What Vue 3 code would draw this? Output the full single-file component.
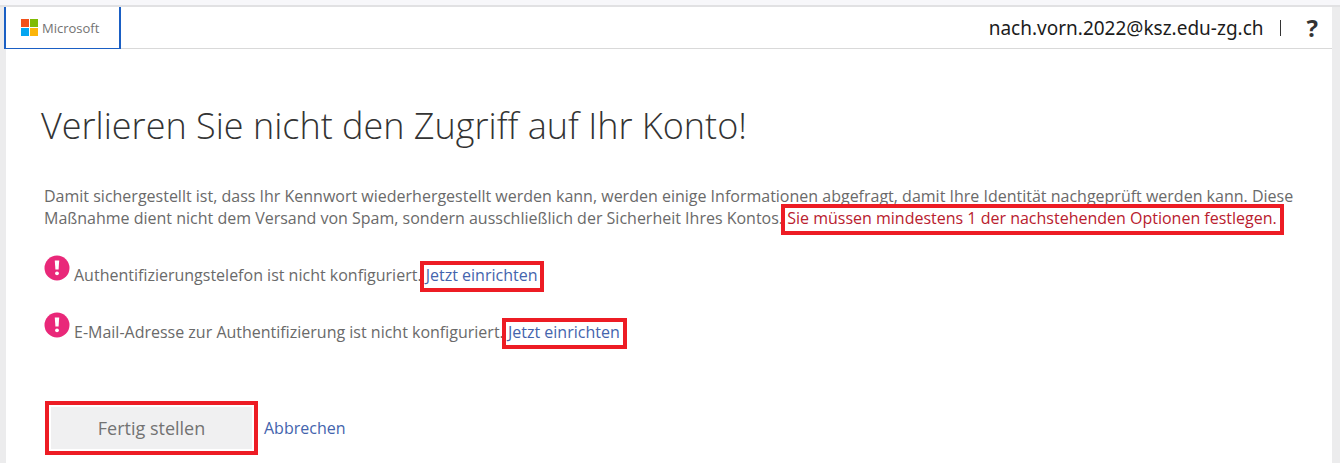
<script setup>
const options = [
  { id: 'phone', text: 'Authentifizierungstelefon ist nicht konfiguriert.' },
  { id: 'mail', text: 'E-Mail-Adresse zur Authentifizierung ist nicht konfiguriert.' },
]
</script>

<template>
  <div class="window">
    <div class="page">
      <header class="topbar">
        <a class="brand" href="#">
          <svg class="tiles" viewBox="0 0 17 17" aria-hidden="true">
            <rect width="8" height="8" fill="#f1511b" />
            <rect x="9" width="8" height="8" fill="#80bb03" />
            <rect y="9" width="8" height="8" fill="#05a6f0" />
            <rect x="9" y="9" width="8" height="8" fill="#fbb50a" />
          </svg>
          <span>Microsoft</span>
        </a>
        <div class="account">
          <span>nach.vorn.2022@ksz.edu-zg.ch</span>
          <span class="divider"></span>
          <button class="help" type="button">?</button>
        </div>
      </header>

      <main class="content">
        <h1>Verlieren Sie nicht den Zugriff auf Ihr Konto!</h1>
        <p class="intro">
          Damit sichergestellt ist, dass Ihr Kennwort wiederhergestellt werden kann, werden einige Informationen abgefragt, damit Ihre Identität nachgeprüft werden kann. Diese Maßnahme dient nicht dem Versand von Spam, sondern ausschließlich der Sicherheit Ihres Kontos. <span class="marked required">Sie müssen mindestens 1 der nachstehenden Optionen festlegen.</span>
        </p>
        <ul class="options">
          <li v-for="option in options" :key="option.id">
            <svg class="alert" viewBox="0 0 26 26" aria-hidden="true">
              <circle cx="13" cy="13" r="12.5" fill="#e92879" />
              <path d="M10.8 5.5h4.4l-.6 9h-3.2z" fill="#fff" />
              <circle cx="13" cy="18.3" r="1.9" fill="#fff" />
            </svg>
            <span class="status">{{ option.text }} <a class="marked link" href="#">Jetzt einrichten</a></span>
          </li>
        </ul>
        <div class="actions">
          <div class="frame"><button class="finish" type="button">Fertig stellen</button></div>
          <a class="link" href="#">Abbrechen</a>
        </div>
      </main>
    </div>
  </div>
</template>

<style>
body {
  background: #ececed;
}
</style>

<style scoped>
.window {
  box-sizing: border-box;
  min-height: 100vh;
  display: flex;
  flex-direction: column;
  border-top: 5px solid #f7f7fa;
  font-family: "Open Sans", "Noto Sans", sans-serif;
  font-size: 16px;
  line-height: 22px;
  color: #6a6a6a;
}
.page {
  flex: 1;
  padding: 0 8px 0 6px;
  border-top: 2px solid #e1e1e3;
  background: linear-gradient(#fff, #fff) content-box, #ececed;
}
.topbar {
  display: flex;
  justify-content: space-between;
  height: 41px;
  border-bottom: 1px solid #d9d9d9;
}
.brand {
  display: flex;
  align-items: center;
  gap: 4px;
  box-sizing: border-box;
  width: 117px;
  height: 42px;
  margin-left: -2px;
  padding-left: 15px;
  border: solid #1a5fc4;
  border-width: 0 2px 1px;
  font-size: 13px;
  color: #737373;
  text-decoration: none;
}
.tiles {
  width: 17px;
  height: 17px;
}
.account {
  display: flex;
  align-items: center;
  padding-right: 14px;
  font-family: "Noto Sans", sans-serif;
  font-size: 19px;
  color: #1c1c1c;
}
.divider {
  width: 1px;
  height: 16px;
  margin: 0 26px 0 16px;
  background: #333;
}
.help {
  padding: 0;
  border: 0;
  background: none;
  font: bold 24px "Noto Sans", sans-serif;
  color: #333;
}
.content {
  padding: 51px 32px 7px 38px;
}
h1 {
  margin: 0 0 33px;
  margin-left: -3px;
  font-size: 36px;
  font-weight: 300;
  line-height: 52px;
  color: #333;
}
.intro {
  margin: 0;
}
.marked {
  display: inline-block;
  position: relative;
}
.marked::after {
  content: "";
  position: absolute;
  inset: -3px -7px -6px -6px;
  border: 4px solid #ed1c24;
  pointer-events: none;
}
.required {
  color: #b9202e;
}
.link {
  color: #4464ad;
  text-decoration: none;
}
.options {
  margin: 26px 0 0;
  padding: 0;
  list-style: none;
}
.options li {
  display: flex;
  gap: 4px;
  height: 31px;
  margin-bottom: 26px;
}
.alert {
  width: 26px;
  height: 26px;
}
.status {
  padding-top: 9px;
}
.actions {
  display: flex;
  align-items: center;
  gap: 6px;
  margin: 58px 0 0 1px;
}
.frame {
  padding: 2px;
  border: 4px solid #ed1c24;
}
.finish {
  display: block;
  width: 201px;
  height: 42px;
  padding: 0;
  border: 0;
  background: #f0f0f1;
  font: 18px "Open Sans", "Noto Sans", sans-serif;
  color: #737373;
}
</style>
